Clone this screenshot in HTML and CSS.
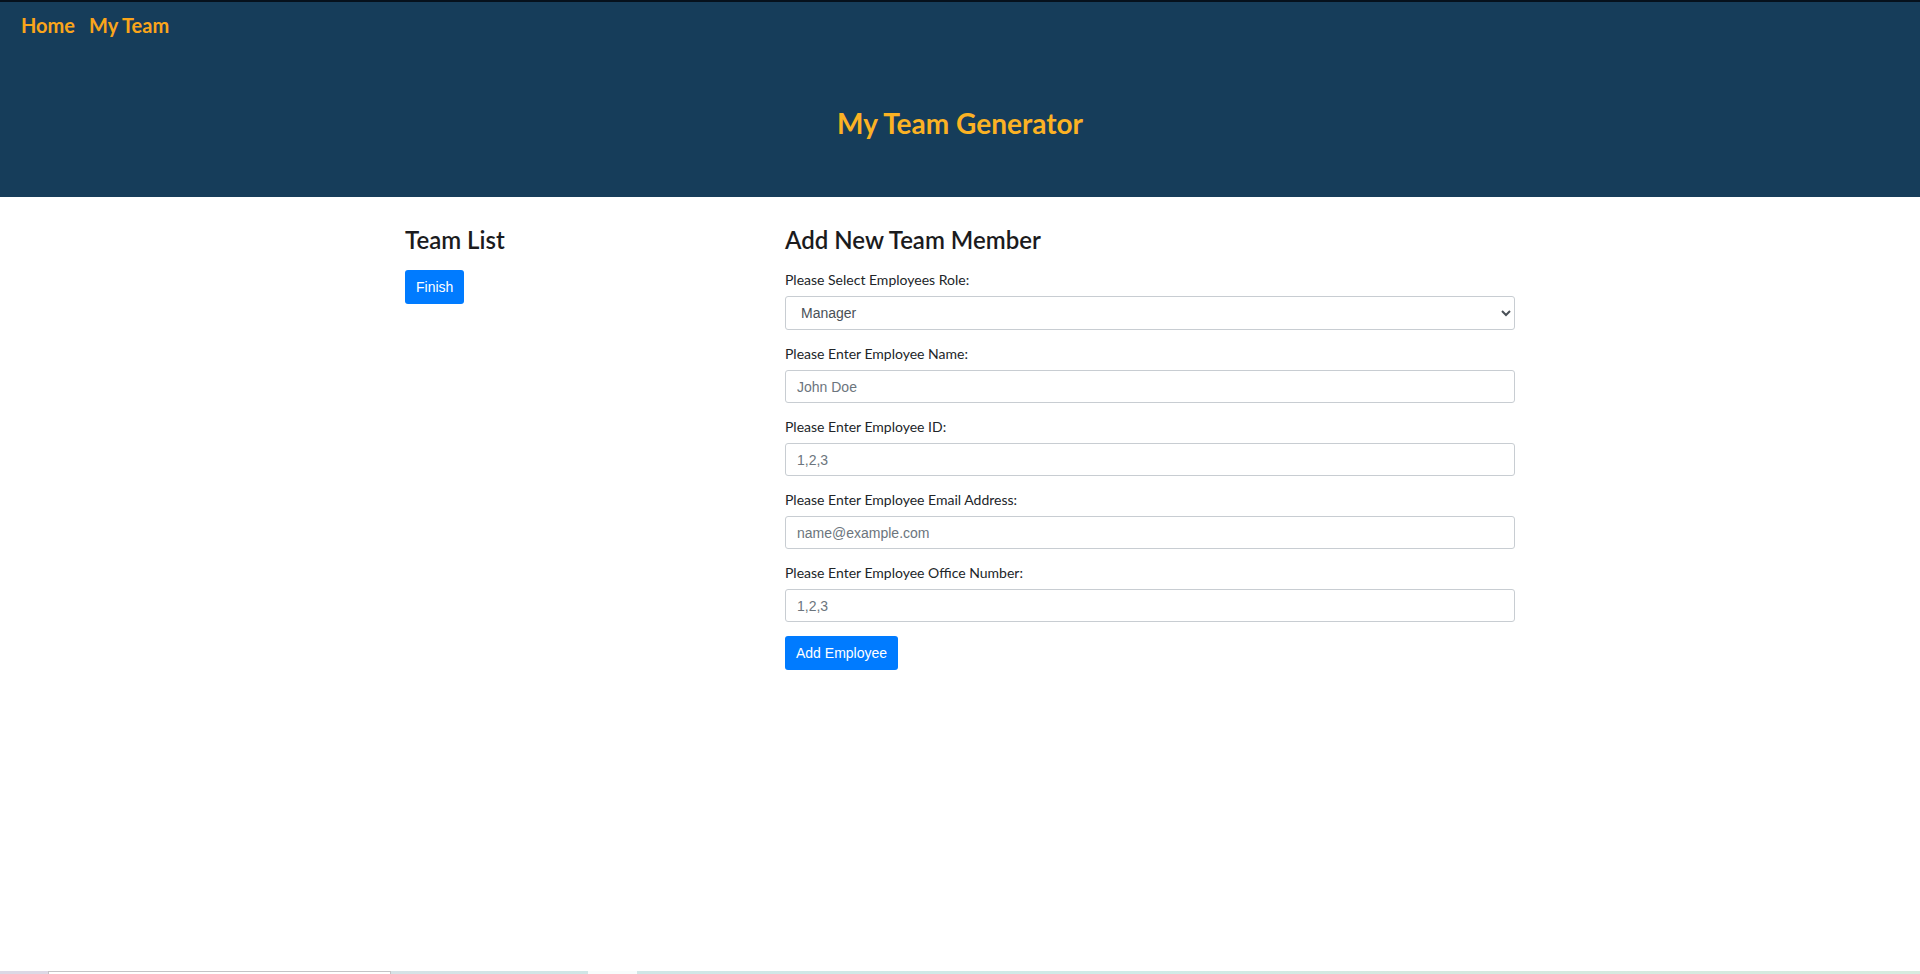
FILE: index.html
```html
<!DOCTYPE html>
<html lang="en">
<head>
<meta charset="utf-8">
<title>My Team Generator</title>
<link rel="stylesheet" href="styles.css">
</head>
<body>
<header class="banner">
  <nav class="nav">
    <a class="nav-link" href="#">Home</a>
    <a class="nav-link" href="#">My Team</a>
  </nav>
  <h1 class="title">My Team Generator</h1>
</header>
<main class="container">
  <section class="column">
    <h2 class="heading">Team List</h2>
    <button class="button" type="button">Finish</button>
  </section>
  <section class="column">
    <h2 class="heading">Add New Team Member</h2>
    <form>
      <div class="group">
        <label class="label" for="role">Please Select Employees Role:</label>
        <select class="control control-select" id="role">
          <option>Manager</option>
          <option>Engineer</option>
          <option>Intern</option>
        </select>
      </div>
      <div class="group">
        <label class="label" for="name">Please Enter Employee Name:</label>
        <input class="control" id="name" type="text" placeholder="John Doe">
      </div>
      <div class="group">
        <label class="label" for="employee-id">Please Enter Employee ID:</label>
        <input class="control" id="employee-id" type="text" placeholder="1,2,3">
      </div>
      <div class="group">
        <label class="label" for="email">Please Enter Employee Email Address:</label>
        <input class="control" id="email" type="email" placeholder="name@example.com">
      </div>
      <div class="group">
        <label class="label" for="office">Please Enter Employee Office Number:</label>
        <input class="control" id="office" type="text" placeholder="1,2,3">
      </div>
      <button class="button" type="button">Add Employee</button>
    </form>
  </section>
</main>
<footer class="strip">
  <div class="strip-start"></div>
  <div class="strip-tab"></div>
  <div class="strip-mid"></div>
  <div class="strip-gap"></div>
  <div class="strip-end"></div>
</footer>
</body>
</html>
```

FILE: styles.css
```css
* {
  box-sizing: border-box;
}

body {
  margin: 0;
  min-height: 100vh;
  display: flex;
  flex-direction: column;
  background: #fff;
  color: #212529;
  font: 14px/20px Lato, sans-serif;
}

.banner {
  border-top: 2px solid #06111c;
  padding: 8px 21px 56px;
  background: #163d5a;
}

.nav {
  display: flex;
  gap: 14px;
}

.nav-link {
  color: #faa51a;
  font-size: 20px;
  font-weight: 700;
  line-height: 30px;
  text-decoration: none;
}

.title {
  margin: 65px 0 0;
  color: #fbb224;
  font-size: 28px;
  font-weight: 700;
  line-height: 36px;
  text-align: center;
}

.container {
  width: 100%;
  max-width: 1140px;
  margin: 0 auto;
  padding: 28px 0;
  display: grid;
  grid-template-columns: 1fr 2fr;
}

.column {
  padding: 0 15px;
}

.heading {
  margin: 0 0 15px;
  color: #1b1b1d;
  font-size: 24px;
  font-weight: 600;
  line-height: 30px;
}

.group {
  margin-bottom: 14px;
}

.label {
  display: block;
  margin-bottom: 6px;
}

.control {
  display: block;
  width: 100%;
  height: 33px;
  padding: 0 11px;
  border: 1px solid #c8cdd2;
  border-radius: 3px;
  background: #fff;
  color: #495057;
  font: 14px/20px "Liberation Sans", Arial, sans-serif;
}

.control-select {
  height: 34px;
  padding: 0 0 0 11px;
}

.control::placeholder {
  color: #6c757d;
  opacity: 1;
}

.button {
  height: 34px;
  padding: 0 11px;
  border: 0;
  border-radius: 3px;
  background: #007bff;
  color: #fff;
  font: 14px/20px "Liberation Sans", Arial, sans-serif;
}

.strip {
  height: 3px;
  margin-top: auto;
  display: grid;
  grid-template-columns: 48fr 343fr 197fr 49fr 1283fr;
}

.strip-start {
  background: #dcd8e5;
}

.strip-tab {
  border: 1px solid #c3c3c6;
  border-bottom: 0;
}

.strip-mid {
  background: linear-gradient(90deg, #d6e2e6, #cfe6e6);
}

.strip-gap {
  background: #f8fcfc;
}

.strip-end {
  background: linear-gradient(90deg, #d0e6e6, #d0ebe7 40%, #d5e8df 60%, #d6ebdf);
}
```
